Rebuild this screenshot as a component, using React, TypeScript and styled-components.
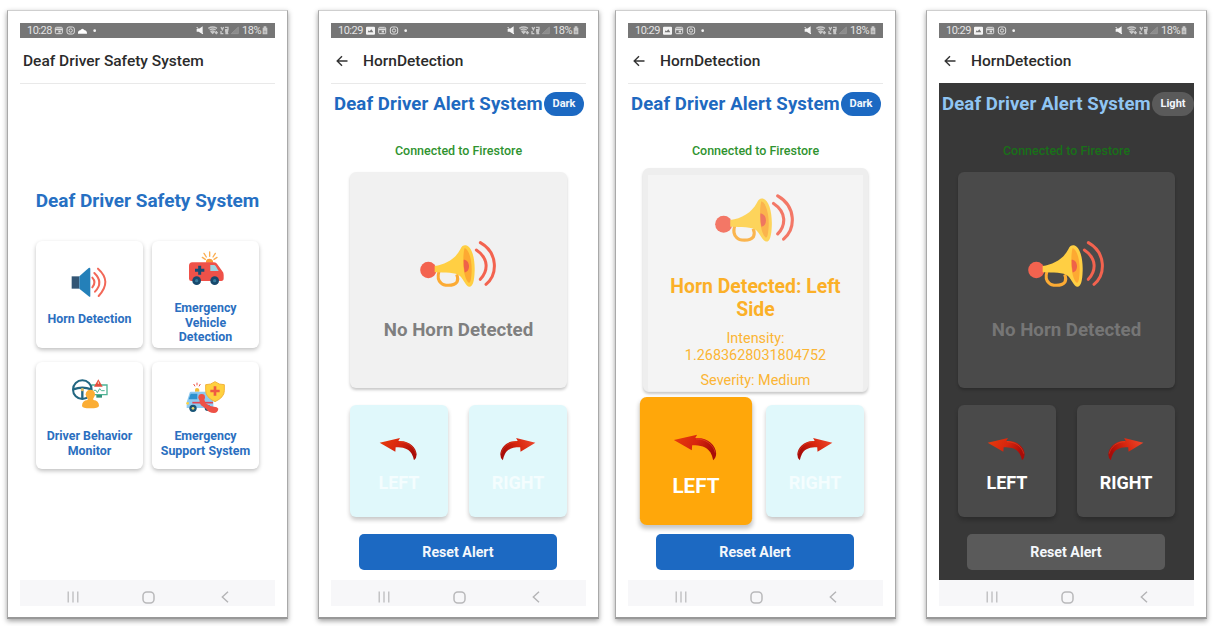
import React from 'react';
import styled, { createGlobalStyle, css } from 'styled-components';

const GlobalStyle = createGlobalStyle`
  * { box-sizing: border-box; }
  body { margin: 0; background: #fff; font-family: Roboto, "Liberation Sans", sans-serif; }
  svg { display: block; flex: none; }
`;

const Board = styled.main`
  display: flex;
  gap: 30px;
  width: 1215px;
  height: 626px;
  padding: 10px 0 0 7px;
  overflow: hidden;
`;

const Pair = styled.div`
  display: flex;
  gap: 16px;
`;

const Frame = styled.section`
  flex: none;
  width: 281px;
  height: 609px;
  padding: 12px 12px 0;
  background: #fff;
  border: 1px solid #a9a9a9;
  border-top-color: #cfcfcf;
  border-bottom: 2px solid #989898;
  box-shadow: 0 2px 5px rgba(0, 0, 0, 0.38);
`;

const Screen = styled.div`
  display: flex;
  flex-direction: column;
  width: 255px;
  height: 583px;
`;

const StatusBar = styled.div`
  display: flex;
  align-items: center;
  flex: none;
  height: 15px;
  padding: 0 7px;
  background: #767676;
  color: #e4e4e4;
  font-size: 11px;
  line-height: 15px;
`;

const StatusGap = styled.div`
  flex: 1;
`;

const Clock = styled.span`
  width: 26px;
  letter-spacing: -0.5px;
`;

const Charge = styled.span`
  width: 20px;
  letter-spacing: -0.45px;
`;

const AppBar = styled.header<{ $nested?: boolean }>`
  display: flex;
  align-items: center;
  flex: none;
  gap: 15px;
  height: 46px;
  padding: 1px 0 0 ${p => (p.$nested ? 5 : 3)}px;
  border-bottom: 1px solid #e9e9e9;
  color: #2b2b2b;
  font-size: 15.5px;
  font-weight: 500;
  line-height: 20px;
  white-space: nowrap;
`;

const Body = styled.div<{ $dark?: boolean }>`
  flex: none;
  height: 497px;
  margin-top: -1px;
  border-top: 1px solid ${p => (p.$dark ? '#383838' : '#e9e9e9')};
  background: ${p => (p.$dark ? '#383838' : '#fff')};
`;

const NavBar = styled.nav`
  display: flex;
  align-items: center;
  justify-content: space-between;
  flex: none;
  height: 26px;
  padding: 8px 46px 0 47px;
  background: #f7f7f9;
`;

const HomeTitle = styled.h1`
  margin: 105px 0 0;
  color: #2670c3;
  font-size: 19px;
  font-weight: 700;
  line-height: 24px;
  text-align: center;
  white-space: nowrap;
`;

const Menu = styled.div`
  display: grid;
  grid-template-columns: 107px 107px;
  gap: 14px 9px;
  padding: 28px 0 0 16px;
`;

const MenuCard = styled.div`
  height: 107px;
  border-radius: 6px;
  background: #fff;
  box-shadow: 0 2px 4px rgba(0, 0, 0, 0.25);
`;

const MenuArt = styled.div<{ $height: number; $top: number }>`
  display: flex;
  justify-content: center;
  height: ${p => p.$height}px;
  padding-top: ${p => p.$top}px;
`;

const MenuLabel = styled.div`
  color: #2b6fc0;
  font-size: 12.4px;
  font-weight: 700;
  line-height: 14.5px;
  text-align: center;
`;

const AlertHead = styled.div`
  display: flex;
  align-items: center;
  height: 42px;
  padding: 0 0 2px 3px;
`;

const AlertTitle = styled.h1<{ $dark?: boolean }>`
  width: 210px;
  margin: 0;
  color: ${p => (p.$dark ? '#90c5f3' : '#1e69c0')};
  font-size: 18.6px;
  font-weight: 700;
  letter-spacing: 0.1px;
  line-height: 24px;
  white-space: nowrap;
`;

const ModeButton = styled.button<{ $dark?: boolean }>`
  flex: none;
  width: ${p => (p.$dark ? 42 : 40)}px;
  height: 24px;
  padding: 0;
  border: 0;
  border-radius: 12px;
  background: ${p => (p.$dark ? '#5a5a5a' : '#1c69c2')};
  color: #f2f6fb;
  font: 700 11px/24px Roboto, sans-serif;
`;

const Connection = styled.div<{ $dark?: boolean }>`
  height: 46px;
  padding-top: 15px;
  color: ${p => (p.$dark ? '#197019' : '#2f9330')};
  font-size: 12.5px;
  font-weight: 500;
  line-height: 20px;
  text-align: center;
`;

const AlertArea = styled.div`
  display: flex;
  flex-direction: column;
  align-items: center;
  height: 233px;
`;

const HornCard = styled.div<{ $dark?: boolean; $active?: boolean }>`
  display: flex;
  flex-direction: column;
  align-items: center;
  flex: none;
  width: 217px;
  height: 216px;
  padding-top: 68px;
  border-radius: 6px;
  background: ${p => (p.$dark ? '#4a4a4a' : '#f1f1f1')};
  box-shadow: 0 2px 3px rgba(0, 0, 0, 0.22);
  ${p => p.$active && css`
    width: 225px;
    height: 224px;
    margin-top: -4px;
    padding-top: 18px;
    border: 5px solid #eeeeee;
    border-top-width: 7px;
    border-bottom-width: 1px;
    background: #f4f4f4;
  `}
`;

const HornArt = styled.div`
  margin-right: 2px;
`;

const IdleText = styled.div<{ $dark?: boolean }>`
  margin-top: 30px;
  color: ${p => (p.$dark ? '#767676' : '#7f7f7f')};
  font-size: 18.7px;
  font-weight: 700;
  line-height: 24px;
`;

const DetectedText = styled.div`
  width: 190px;
  margin-top: 32px;
  color: #fbb028;
  font-size: 19.4px;
  font-weight: 700;
  line-height: 23px;
  text-align: center;
`;

const DetailText = styled.div<{ $top: number }>`
  width: 160px;
  margin-top: ${p => p.$top}px;
  color: #fbb535;
  font-size: 14.4px;
  line-height: 17px;
  text-align: center;
`;

const Directions = styled.div`
  display: flex;
  justify-content: center;
  gap: 21px;
  height: 129px;
`;

const DirectionCard = styled.div<{ $dark?: boolean; $active?: boolean }>`
  display: flex;
  flex-direction: column;
  align-items: center;
  flex: none;
  width: 98px;
  height: 112px;
  padding-top: 32px;
  border-radius: 6px;
  background: ${p => (p.$active ? '#ffa70a' : p.$dark ? '#4a4a4a' : '#e0f8fb')};
  color: ${p => (p.$dark || p.$active ? '#fff' : '#f4fdfe')};
  box-shadow: 0 3px 4px rgba(0, 0, 0, 0.22);
  font-size: 18px;
  font-weight: 700;
  line-height: 24px;
  transform: ${p => (p.$active ? 'scale(1.145)' : 'none')};
`;

const DirectionArt = styled.div<{ $shift?: number }>`
  height: 34px;
  margin-right: ${p => p.$shift ?? 0}px;
`;

const ResetButton = styled.button<{ $dark?: boolean }>`
  display: block;
  width: 198px;
  height: 36px;
  margin-left: 28px;
  padding: 0;
  border: 0;
  border-radius: 5px;
  background: ${p => (p.$dark ? '#5a5a5a' : '#1c69c2')};
  color: #f4f7fb;
  font: 700 14.2px/36px Roboto, sans-serif;
`;

const LeadingStatusIcons = ({ home }: { home?: boolean }) => (
  <svg width="47" height="11" viewBox="162 77 141 33" fill="none" stroke="#dedede" strokeWidth="3">
    {home ? (
      <>
        <rect x="169" y="84" width="21" height="19" rx="3" />
        <path d="M169 90H190M178 97h7" strokeWidth="5" />
        <rect x="204" y="83" width="22" height="21" rx="6" />
        <circle cx="215" cy="93.500" r="5" />
        <path d="M237 103q-1-9 7-10q6-10 13 0q7 1 7 10Z" fill="#fff" stroke="none" />
      </>
    ) : (
      <>
        <path d="M171 82h21q3 0 3 3v18q0 3-3 3h-21q-3 0-3-3v-18q0-3 3-3Zm2 17h17l-6-9-5 6-3-3Z" fill="#f4f4f4" fillRule="evenodd" stroke="none" />
        <rect x="206" y="84" width="21" height="19" rx="3" />
        <path d="M206 90H227M215 97h7" strokeWidth="5" />
        <rect x="241" y="83" width="22" height="21" rx="6" />
        <circle cx="252" cy="93.500" r="5" />
      </>
    )}
    <circle cx="287" cy="94" r="4" fill="#f4f4f4" stroke="none" />
  </svg>
);

const TrailingStatusIcons = () => (
  <svg width="47" height="11" viewBox="583 77 141 33" fill="none" stroke="#c8c8c8" strokeWidth="3">
    <path d="M588 89h6l12-8v24l-12-8h-6Z" fill="#f4f4f4" stroke="none" />
    <path d="M588 83l19 21" stroke="#f4f4f4" />
    <path d="M623 87q13-8 26 0M627 92q9-6 18 0M631 97q5-4 10 0l-5 5ZM647 95v8m-4-4 4 4 4-4" strokeWidth="4" />
    <path d="M661 83l4 8 4-8M673 84h9v7h-9M661 95v8h7M673 95h10M674 99h8M674 103h9M679 95v8" strokeWidth="4" />
    <path d="M692 103l21-20v20Z" stroke="#9b9b9b" fill="#8b8b8b" strokeWidth="2" />
  </svg>
);

const BatteryIcon = () => (
  <svg width="6" height="9" viewBox="0 0 18 27" fill="#c9c9c9">
    <path d="M5 1h8v4h3v20H2V5h3Z" />
    <path d="M5 17h8M9 13v9" stroke="#999" strokeWidth="2" />
  </svg>
);

const BackIcon = () => (
  <svg width="12" height="12" viewBox="0 0 12 12" fill="none" stroke="#333" strokeWidth="1.400">
    <path d="M11.500 6H1.200M6 1.200 1.200 6 6 10.800" />
  </svg>
);

const RecentsIcon = () => (
  <svg width="12" height="12" viewBox="0 0 12 12" stroke="#b6b6b8" strokeWidth="1.200">
    <path d="M1.200 .5v11M6 .5v11M10.800 .5v11" />
  </svg>
);

const HomeGlyph = styled.svg`
  margin-right: 3px;
`;

const HomeIcon = () => (
  <HomeGlyph width="13" height="13" viewBox="0 0 13 13" fill="none" stroke="#b9b9bb" strokeWidth="1.500">
    <rect x="1" y="1" width="11" height="11" rx="3.800" />
  </HomeGlyph>
);

const PreviousIcon = () => (
  <svg width="8" height="12" viewBox="0 0 8 12" fill="none" stroke="#b4b4b6" strokeWidth="1.400">
    <path d="M7 .7 1.300 6 7 11.300" />
  </svg>
);

const HornIcon = ({ faded }: { faded?: boolean }) => (
  <svg width={faded ? 79 : 76} height={faded ? 50 : 48} viewBox="240 60 228 144" fill="none" opacity={faded ? 0.86 : 1}>
    <circle cx="265" cy="150" r="24.500" fill="#f3634f" />
    <path d="M297 154C292 170 295 182 303 189C309 196 317 196 325 196C337 196 345 194 351 186C354 180 354 172 350 163" stroke="#fcab34" strokeWidth="9" />
    <path d="M284 138C316 134 347 116 361 88C366 77 371 75 378 76C396 80 405 116 404 152C403 187 397 202 387 200C377 198 372 180 360 168C347 156 316 159 284 157Z" fill="#ffcf43" />
    <path d="M374 84C387 88 396 121 395 153C394 177 391 191 386 188C376 180 370 154 370 125C370 105 371 94 374 84Z" fill="#fda932" />
    <path d="M371 119C380 119 387 127 387 139C387 150 381 157 374 157Q370 139 371 119Z" fill="#ef6248" />
    <path d="M409 90C448 116 444 154 421 178M421 68C475 99 473 164 438 193" stroke="#f3634f" strokeWidth="9" strokeLinecap="round" />
  </svg>
);

const SpeakerIcon = () => (
  <svg width="37" height="33" viewBox="153 108 111 99" fill="none">
    <path d="M155 139h23v37h-23Z" fill="#335675" />
    <path d="M178 139l28-25q5-3 5 3v80q0 6-5 2l-28-23Z" fill="#2480b9" />
    <path d="M217 143q13 14 0 29M223 129q29 28 2 56M234 116q43 38 2 82" stroke="#f26858" strokeWidth="6" strokeLinecap="round" />
  </svg>
);

const AmbulanceIcon = () => (
  <svg width="38" height="37" viewBox="501 60 114 111" fill="none">
    <path d="M569 66v13M552 70l7 11M586 70l-7 11M547 82l9 6M591 82l-9 6" stroke="#fbae51" strokeWidth="4" strokeLinecap="round" />
    <path d="M558 98v-6q2-6 10-6t11 6v6Z" fill="#f99a36" />
    <path d="M517 97h65q7 0 10 6l15 21q4 4 4 11v10q0 8-7 8h-90q-7 0-7-7v-38q0-11 10-11Z" fill="#ef5149" />
    <path d="M571 105h11q3 0 5 3l9 15h-25Z" fill="#9ed6e3" />
    <path d="M539 107v27M525 121h28" stroke="#174a73" strokeWidth="9" />
    <circle cx="530" cy="152" r="13" fill="#17496d" />
    <circle cx="530" cy="152" r="5" fill="#36799b" />
    <circle cx="584" cy="152" r="13" fill="#17496d" />
    <circle cx="584" cy="152" r="5" fill="#36799b" />
  </svg>
);

const DriverIcon = () => (
  <svg width="37" height="31" viewBox="153 443 111 93" fill="none">
    <path d="M214 464h47v29h-47" stroke="#4eb394" strokeWidth="4" />
    <path d="M221 480h7l4 7 7-12 5 6h10" stroke="#4eb394" strokeWidth="3" />
    <path d="M229 494h17v8h-17Z" fill="#33937b" />
    <path d="M235 447l13 22h-26Z" fill="#e64c3d" />
    <path d="M235 454v7" stroke="#ffd0b0" strokeWidth="3" />
    <circle cx="187" cy="478" r="28" stroke="#226681" strokeWidth="6" />
    <path d="M160 477q27-10 54 0M187 480v25" stroke="#226681" strokeWidth="7" />
    <circle cx="187" cy="478" r="5" fill="#d7ba63" />
    <circle cx="211" cy="492" r="14" fill="#fbad34" />
    <path d="M203 501h17v8q17 2 17 17q-1 8-26 8t-25-8q0-15 17-17Z" fill="#fbad34" />
  </svg>
);

const SupportIcon = () => (
  <svg width="41" height="34" viewBox="488 449 123 102" fill="none">
    <path d="M524 457v8M514 461l4 7M534 461l-4 7" stroke="#ed5146" strokeWidth="3" />
    <path d="M518 484v-6q0-5 6-5t7 5v6Z" fill="#f2bd37" />
    <path d="M505 484h62q6 0 6 6v43h-80v-17l8-26q1-6 4-6Z" fill="#8fcaf0" />
    <path d="M505 490h20v17h-26Z" fill="#2d91ce" />
    <circle cx="512" cy="534" r="11" fill="#195577" />
    <circle cx="512" cy="534" r="4" fill="#e9d66c" />
    <circle cx="556" cy="533" r="9" fill="#195577" />
    <circle cx="496" cy="519" r="4" fill="#ffd13e" />
    <path d="M510 517h62" stroke="#df4554" strokeWidth="5" />
    <circle cx="538" cy="501" r="10" fill="#ed5146" />
    <path d="M531 505q7-5 14 0l5 14q12 10 25 10q10 0 13 6q-2 13-13 13q-15 0-24-13l-15-10q-5-7-5-20Z" fill="#ed5146" />
    <path d="M578 454q13 10 28 9v18q0 20-28 33q-28-13-28-33v-18q15 1 28-9Z" fill="#ffd13e" stroke="#f3b33a" strokeWidth="3" />
    <path d="M578 468v28M564 482h28" stroke="#ef5a43" strokeWidth="8" />
  </svg>
);

const TurnIcon = ({ id, right }: { id: string; right?: boolean }) => (
  <svg width={right ? 36 : 38} height="24" viewBox="118 140 114 72" preserveAspectRatio="none" transform={right ? 'scale(-1 1)' : undefined}>
    <defs>
      <linearGradient id={id} x1="0" y1="0" x2="1" y2="0.400">
        <stop offset="0" stopColor={right ? '#ee4b30' : '#e83d0b'} />
        <stop offset="0.550" stopColor="#d8260e" />
        <stop offset="1" stopColor="#a90c08" />
      </linearGradient>
    </defs>
    <path d="M120 157L181 143L176 152C207 149 230 170 231 192Q231 204 223 210Q220 197 216 190C205 174 190 171 168 171L167 184Z" fill={`url(#${id})`} />
    <path d="M178 154C203 154 224 169 228 190" fill="none" stroke="#f05a32" strokeWidth="2" opacity="0.600" />
  </svg>
);

const Phone = ({ time, title, nested, dark, children }: {
  time: string; title: string; nested?: boolean; dark?: boolean; children: React.ReactNode;
}) => (
  <Frame>
    <Screen>
      <StatusBar>
        <Clock>{time}</Clock>
        <LeadingStatusIcons home={!nested} />
        <StatusGap />
        <TrailingStatusIcons />
        <Charge>18%</Charge>
        <BatteryIcon />
      </StatusBar>
      <AppBar $nested={nested}>
        {nested && <BackIcon />}
        <span>{title}</span>
      </AppBar>
      <Body $dark={dark}>{children}</Body>
      <NavBar>
        <RecentsIcon />
        <HomeIcon />
        <PreviousIcon />
      </NavBar>
    </Screen>
  </Frame>
);

const HomePhone = () => (
  <Phone time="10:28" title="Deaf Driver Safety System">
    <HomeTitle>Deaf Driver Safety System</HomeTitle>
    <Menu>
      <MenuCard>
        <MenuArt $height={71} $top={25}><SpeakerIcon /></MenuArt>
        <MenuLabel>Horn Detection</MenuLabel>
      </MenuCard>
      <MenuCard>
        <MenuArt $height={60} $top={9}><AmbulanceIcon /></MenuArt>
        <MenuLabel>Emergency<br />Vehicle<br />Detection</MenuLabel>
      </MenuCard>
      <MenuCard>
        <MenuArt $height={67} $top={16}><DriverIcon /></MenuArt>
        <MenuLabel>Driver Behavior<br />Monitor</MenuLabel>
      </MenuCard>
      <MenuCard>
        <MenuArt $height={67} $top={18}><SupportIcon /></MenuArt>
        <MenuLabel>Emergency<br />Support System</MenuLabel>
      </MenuCard>
    </Menu>
  </Phone>
);

const AlertPhone = ({ name, dark, detected }: { name: string; dark?: boolean; detected?: boolean }) => (
  <Phone time="10:29" title="HornDetection" nested dark={dark}>
    <AlertHead>
      <AlertTitle $dark={dark}>Deaf Driver Alert System</AlertTitle>
      <ModeButton $dark={dark}>{dark ? 'Light' : 'Dark'}</ModeButton>
    </AlertHead>
    <Connection $dark={dark}>Connected to Firestore</Connection>
    <AlertArea>
      <HornCard $dark={dark} $active={detected}>
        <HornArt><HornIcon faded={detected} /></HornArt>
        {detected ? (
          <>
            <DetectedText>Horn Detected: Left Side</DetectedText>
            <DetailText $top={9}>Intensity: 1.2683628031804752</DetailText>
            <DetailText $top={8}>Severity: Medium</DetailText>
          </>
        ) : (
          <IdleText $dark={dark}>No Horn Detected</IdleText>
        )}
      </HornCard>
    </AlertArea>
    <Directions>
      <DirectionCard $dark={dark} $active={detected}>
        <DirectionArt $shift={2}><TurnIcon id={`${name}-left`} /></DirectionArt>
        LEFT
      </DirectionCard>
      <DirectionCard $dark={dark}>
        <DirectionArt><TurnIcon id={`${name}-right`} right /></DirectionArt>
        RIGHT
      </DirectionCard>
    </Directions>
    <ResetButton $dark={dark}>Reset Alert</ResetButton>
  </Phone>
);

export default function App() {
  return (
    <>
      <GlobalStyle />
      <Board>
        <HomePhone />
        <Pair>
          <AlertPhone name="idle" />
          <AlertPhone name="detected" detected />
        </Pair>
        <AlertPhone name="night" dark />
      </Board>
    </>
  );
}
